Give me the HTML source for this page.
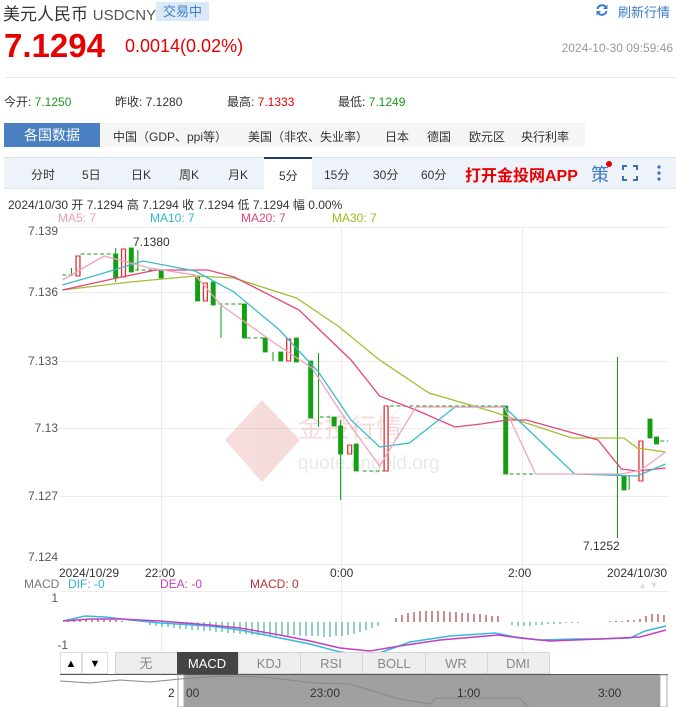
<!DOCTYPE html>
<html><head><meta charset="utf-8">
<style>
*{margin:0;padding:0;box-sizing:border-box}
body{width:676px;height:707px;overflow:hidden;background:#fff;font-family:"Liberation Sans","Noto Sans CJK SC",sans-serif;color:#333;position:relative}
.a{position:absolute;white-space:nowrap}
</style></head><body>
<div class="a" style="left:3px;top:0px;font-size:17px;color:#333">美元人民币 <span style="font-size:15px;color:#555">USDCNY</span></div>
<div class="a" style="left:156px;top:2px;width:53px;height:19px;background:#dbe9f7;color:#3d7fc9;font-size:13px;line-height:19px;text-align:center">交易中</div>
<svg class="a" style="left:595px;top:3px" width="14" height="14" viewBox="0 0 14 14"><path d="M2.5 6A4.6 4.6 0 0 1 11 4.5" fill="none" stroke="#3a7bc8" stroke-width="2"/><path d="M11.5 8A4.6 4.6 0 0 1 3 9.5" fill="none" stroke="#3a7bc8" stroke-width="2"/><path d="M12.5 1.5v4.5h-4.5z M1.5 12.5v-4.5h4.5z" fill="#3a7bc8"/></svg>
<div class="a" style="left:618px;top:2px;font-size:13px;color:#3a7bc8">刷新行情</div>
<div class="a" style="left:4px;top:27px;font-size:33px;font-weight:bold;color:#e60000">7.1294</div>
<div class="a" style="left:125px;top:36px;font-size:18px;color:#e60000">0.0014(0.02%)</div>
<div class="a" style="right:3px;top:41px;font-size:12px;color:#999">2024-10-30 09:59:46</div>
<div class="a" style="left:5px;top:77px;width:671px;height:1px;background:#e5e5e5"></div>
<div class="a" style="left:4px;top:93px;font-size:12px;color:#333">今开: <span style="color:#1a9a1a">7.1250</span></div>
<div class="a" style="left:115px;top:93px;font-size:12px;color:#333">昨收: 7.1280</div>
<div class="a" style="left:227px;top:93px;font-size:12px;color:#333">最高: <span style="color:#e60000">7.1333</span></div>
<div class="a" style="left:338px;top:93px;font-size:12px;color:#333">最低: <span style="color:#1a9a1a">7.1249</span></div>
<div class="a" style="left:100px;top:123px;width:485px;height:24px;background:#f5f5f5"></div>
<div class="a" style="left:4px;top:123px;width:96px;height:24px;background:#4a7fc1;color:#fff;font-size:14px;line-height:24px;text-align:center">各国数据</div>
<div class="a" style="left:113px;top:128px;font-size:12px;color:#333">中国（GDP、ppi等）</div>
<div class="a" style="left:248px;top:128px;font-size:12px;color:#333">美国（非农、失业率）</div>
<div class="a" style="left:385px;top:128px;font-size:12px;color:#333">日本</div>
<div class="a" style="left:427px;top:128px;font-size:12px;color:#333">德国</div>
<div class="a" style="left:469px;top:128px;font-size:12px;color:#333">欧元区</div>
<div class="a" style="left:521px;top:128px;font-size:12px;color:#333">央行利率</div>
<div class="a" style="left:4px;top:157px;width:672px;height:32px;background:#eef3fa;border-top:1px solid #d6e3f1;border-bottom:1px solid #d6e3f1"></div>
<div class="a" style="left:264px;top:157px;width:48px;height:32px;background:#fff;border-top:2px solid #1f3a6b"></div>
<div class="a" style="top:166px;left:0;font-size:12px;color:#333">
<span class="a" style="left:31px">分时</span><span class="a" style="left:82px">5日</span><span class="a" style="left:131px">日K</span><span class="a" style="left:179px">周K</span><span class="a" style="left:228px">月K</span><span class="a" style="left:279px;top:1px">5分</span><span class="a" style="left:324px">15分</span><span class="a" style="left:373px">30分</span><span class="a" style="left:421px">60分</span></div>
<div class="a" style="left:465px;top:162px;font-size:16px;font-weight:bold;color:#e60000">打开金投网APP</div>
<div class="a" style="left:591px;top:161px;font-size:18px;color:#3a7bc8">策</div>
<div class="a" style="left:606px;top:161px;width:6px;height:6px;border-radius:3px;background:#e60000"></div>
<svg class="a" style="left:622px;top:165px" width="16" height="16"><path d="M1 5V1h4M11 1h4v4M15 11v4h-4M5 15H1v-4" fill="none" stroke="#3a6fb8" stroke-width="2"/></svg>
<svg class="a" style="left:656px;top:164px" width="6" height="18"><circle cx="3" cy="3" r="1.6" fill="#3a6fb8"/><circle cx="3" cy="9" r="1.6" fill="#3a6fb8"/><circle cx="3" cy="15" r="1.6" fill="#3a6fb8"/></svg>
<div class="a" style="left:8px;top:196px;font-size:12px;color:#333">2024/10/30 开 7.1294 高 7.1294 收 7.1294 低 7.1294 幅 0.00%</div>
<div class="a" style="left:58px;top:211px;font-size:12px;color:#f09ab6">MA5: 7</div>
<div class="a" style="left:150px;top:211px;font-size:12px;color:#2fb6cc">MA10: 7</div>
<div class="a" style="left:241px;top:211px;font-size:12px;color:#e3457e">MA20: 7</div>
<div class="a" style="left:332px;top:211px;font-size:12px;color:#9bbd1a">MA30: 7</div>

<svg class="a" style="left:0;top:0" width="676" height="707">
<g stroke="#ececec" stroke-width="1">
<line x1="60" y1="227.5" x2="668" y2="227.5"/><line x1="60" y1="292.5" x2="668" y2="292.5"/><line x1="60" y1="361.5" x2="668" y2="361.5"/><line x1="60" y1="428.5" x2="668" y2="428.5"/><line x1="60" y1="496.5" x2="668" y2="496.5"/><line x1="60" y1="564.5" x2="668" y2="564.5"/>
<line x1="161.5" y1="227" x2="161.5" y2="652"/><line x1="341.5" y1="227" x2="341.5" y2="652"/><line x1="522.5" y1="227" x2="522.5" y2="652"/>
<line x1="60" y1="591.5" x2="668" y2="591.5"/>
</g>
<g font-size="12" fill="#555" text-anchor="end" font-family="Liberation Sans">
<text x="58" y="235">7.139</text><text x="58" y="296">7.136</text><text x="58" y="365">7.133</text><text x="58" y="432">7.13</text><text x="58" y="500">7.127</text><text x="58" y="561">7.124</text>
</g>
<g opacity="0.18"><path d="M262 400 L300 440 L262 482 L225 440 Z" fill="#d04040"/><text x="298" y="437" font-size="26" fill="#d04040" font-family="Noto Sans CJK SC">金投行情</text><text x="298" y="469" font-size="19" fill="#888" font-family="Liberation Sans">quote.cngold.org</text></g>
<g transform="scale(1.3,1)">
<g stroke="#12a012" fill="#12a012" stroke-width="1" stroke-dasharray="3,2">
<line x1="48" y1="275" x2="58" y2="275"/><line x1="62" y1="254" x2="88" y2="254"/><line x1="104" y1="270" x2="122" y2="270"/><line x1="168" y1="304" x2="186" y2="304"/><line x1="190" y1="338" x2="204" y2="338"/><line x1="246" y1="417" x2="256" y2="417"/><line x1="279" y1="471" x2="296" y2="471"/><line x1="300" y1="406" x2="388" y2="406"/><line x1="392" y1="474" x2="412" y2="474"/><line x1="508" y1="441" x2="514" y2="441"/>
</g>
<g fill="#12a012" stroke="#12a012" stroke-width="0.8">
<line x1="55" y1="268" x2="55" y2="276"/>
<rect x="87.5" y="254" width="3" height="24"/><line x1="89" y1="248" x2="89" y2="282"/>
<rect x="99.5" y="248" width="3" height="24"/><line x1="106" y1="250" x2="106" y2="270"/>
<rect x="122.5" y="271" width="3" height="7"/>
<rect x="150.5" y="276" width="3" height="25"/>
<rect x="162.5" y="282" width="3" height="23"/>
<line x1="170" y1="304" x2="170" y2="338"/>
<rect x="186.5" y="304" width="3" height="34"/>
<rect x="202.5" y="338" width="3" height="14"/>
<line x1="210" y1="352" x2="210" y2="361"/>
<rect x="214.5" y="352" width="3" height="9"/>
<rect x="226.5" y="338" width="3" height="24"/>
<rect x="237.5" y="361" width="3" height="57"/><line x1="245" y1="353" x2="245" y2="427"/>
<rect x="255.5" y="417" width="3" height="9"/>
<rect x="260.5" y="426" width="3" height="28"/><line x1="262" y1="420" x2="262" y2="500"/>
<rect x="272.5" y="444" width="3" height="27"/>
<rect x="387.5" y="406" width="3" height="68"/>
<line x1="475" y1="357" x2="475" y2="538"/><line x1="473" y1="475" x2="478" y2="475"/>
<rect x="478.5" y="476" width="3" height="14"/><line x1="484" y1="476" x2="484" y2="490"/>
<rect x="498.5" y="419" width="3" height="19"/>
<rect x="503.5" y="437" width="3" height="7"/>
</g>
<g fill="#fff" stroke="#e03030" stroke-width="1">
<rect x="58.5" y="256" width="3" height="20"/>
<rect x="93.5" y="249" width="3" height="28"/>
<rect x="156.5" y="283" width="3" height="18"/>
<rect x="220.5" y="339" width="3" height="22"/>
<rect x="267.5" y="445" width="3" height="9"/>
<rect x="295.5" y="406" width="3" height="65"/>
<rect x="491.5" y="441" width="3" height="40"/>
</g>
<g fill="none" stroke-width="1.3">
<polyline vector-effect="non-scaling-stroke" stroke="#a6bd32" points="48,290 100,282 150,276 180,278 228,298 260,326 292,360 330,393 380,412 400,421 440,438 480,438 490,448 512,452"/>
<polyline vector-effect="non-scaling-stroke" stroke="#e3457e" points="48,290 90,278 120,270 160,270 180,277 230,310 270,360 292,396 320,410 350,427 370,424 390,420 405,420 460,440 478,469 490,471 512,468"/>
<polyline vector-effect="non-scaling-stroke" stroke="#3bb9d0" points="48,285 80,273 110,261 150,271 180,292 215,330 245,372 270,420 292,447 315,443 350,407 388,407 442,474 490,476 512,464"/>
<polyline vector-effect="non-scaling-stroke" stroke="#f2a3bc" points="48,280 80,256 115,268 150,275 170,305 210,342 240,368 262,412 292,466 320,407 388,407 412,474 478,474 493,470 512,452"/>
</g>
</g>
<text x="133" y="246" font-size="12" fill="#333" font-family="Liberation Sans">7.1380</text>
<text x="583" y="550" font-size="12" fill="#333" font-family="Liberation Sans">7.1252</text>
<g font-size="12" fill="#333" font-family="Liberation Sans">
<text x="59" y="577">2024/10/29</text><text x="145" y="577">22:00</text><text x="330" y="577">0:00</text><text x="508" y="577">2:00</text><text x="607" y="577">2024/10/30</text>
</g>
<g font-size="12" font-family="Liberation Sans">
<text x="24" y="588" fill="#777">MACD</text><text x="68" y="588" fill="#2fb6cc">DIF: -0</text><text x="160" y="588" fill="#c040c0">DEA: -0</text><text x="250" y="588" fill="#c03030">MACD: 0</text>
<text x="58" y="602" fill="#555" text-anchor="end">1</text><text x="68" y="649" fill="#555" text-anchor="end">-1</text>
<text x="638" y="588" fill="#ddd" font-size="9">▲ ▼</text>
</g>
<g stroke-width="1">
<g stroke="#2aa080">
<path d="M150 622v3M156 622v4M162 622v5M168 622v5M174 622v6M180 622v7M186 622v7M192 622v8M198 622v8M204 622v9M210 622v9M216 622v10M222 622v10M228 622v11M234 622v11M240 622v12M246 622v12M252 622v13M258 622v13M264 622v13M270 622v14M276 622v14M282 622v14M288 622v14M294 622v13M300 622v14M306 622v14M312 622v14M318 622v14M324 622v15M330 622v15M336 622v14M342 622v14M348 622v13M354 622v12M360 622v10M366 622v8M372 622v6M378 622v4"/>
<path d="M512 622v3M518 622v4M524 622v4M530 622v4M536 622v3M542 622v3M548 622v2M554 622v2M560 622v2M566 622v1M572 622v1M578 622v1"/>
</g>
<g stroke="#a01818">
<path d="M68 622v-3M74 622v-3M80 622v-3M86 622v-3M92 622v-3M98 622v-3M104 622v-3M110 622v-2M116 622v-2M122 622v-1"/>
<path d="M396 622v-4M402 622v-7M408 622v-9M414 622v-10M420 622v-11M426 622v-11M432 622v-11M438 622v-11M444 622v-11M450 622v-10M456 622v-10M462 622v-9M468 622v-9M474 622v-8M480 622v-8M486 622v-7M492 622v-6M498 622v-6"/>
<path d="M610 622v-1M616 622v-1M622 622v-1M628 622v-2M634 622v-2M640 622v-3M646 622v-6M652 622v-8M658 622v-8M664 622v-7"/>
</g>
</g>
<polyline fill="none" stroke="#36b8e0" stroke-width="1.5" points="63,621 85,616 105,617 130,620 160,623 210,626 240,630 280,638 310,644 340,652 370,656 385,651 410,642 450,636 495,633 515,637 540,640 575,639 600,639 630,638 645,631 666,626"/>
<polyline fill="none" stroke="#c040c0" stroke-width="1.5" points="63,621 90,619 120,619 160,621 210,625 240,628 280,635 310,641 340,648 370,651 400,646 440,640 498,635 520,638 550,641 600,639 640,637 666,630"/>
<rect x="60.5" y="652.5" width="21" height="21" fill="#fff" stroke="#ddd"/>
<rect x="82.5" y="652.5" width="25" height="21" fill="#fff" stroke="#ddd"/>
<text x="71" y="667" font-size="11" text-anchor="middle">▲</text><text x="95" y="667" font-size="11" text-anchor="middle">▼</text>
<g stroke="#d5d5d5" fill="#eee">
<rect x="115.5" y="652.5" width="62" height="21"/><rect x="238.5" y="652.5" width="62" height="21"/><rect x="300.5" y="652.5" width="62" height="21"/><rect x="362.5" y="652.5" width="63" height="21"/><rect x="425.5" y="652.5" width="62" height="21"/><rect x="487.5" y="652.5" width="62" height="21"/>
</g>
<rect x="177" y="652" width="61" height="22" fill="#444"/>
<g font-size="13" fill="#888" text-anchor="middle" font-family="Liberation Sans,Noto Sans CJK SC">
<text x="146" y="668">无</text><text x="207" y="668" fill="#fff">MACD</text><text x="269" y="668">KDJ</text><text x="331" y="668">RSI</text><text x="394" y="668">BOLL</text><text x="456" y="668">WR</text><text x="518" y="668">DMI</text>
</g>
<rect x="60" y="674" width="608" height="33" fill="#fff"/>
<line x1="60" y1="674.5" x2="668" y2="674.5" stroke="#555"/>
<rect x="184" y="675" width="478" height="32" fill="#a0a0a0"/>
<rect x="178" y="675" width="6" height="32" fill="#fff" stroke="#aaa"/>
<rect x="660" y="675" width="7" height="32" fill="#fff" stroke="#aaa"/>
<polyline fill="none" stroke="#888" points="60,681 90,683 120,680 150,682 180,679 220,676 260,677 290,680 315,683 350,684 370,690 400,699 430,704 435,698 470,698 520,698 528,707"/>
<g font-size="12" fill="#333" font-family="Liberation Sans"><text x="168" y="697">2</text><text x="186" y="697">00</text><text x="310" y="697">23:00</text><text x="457" y="697">1:00</text><text x="598" y="697">3:00</text></g>
</svg>
</body></html>
